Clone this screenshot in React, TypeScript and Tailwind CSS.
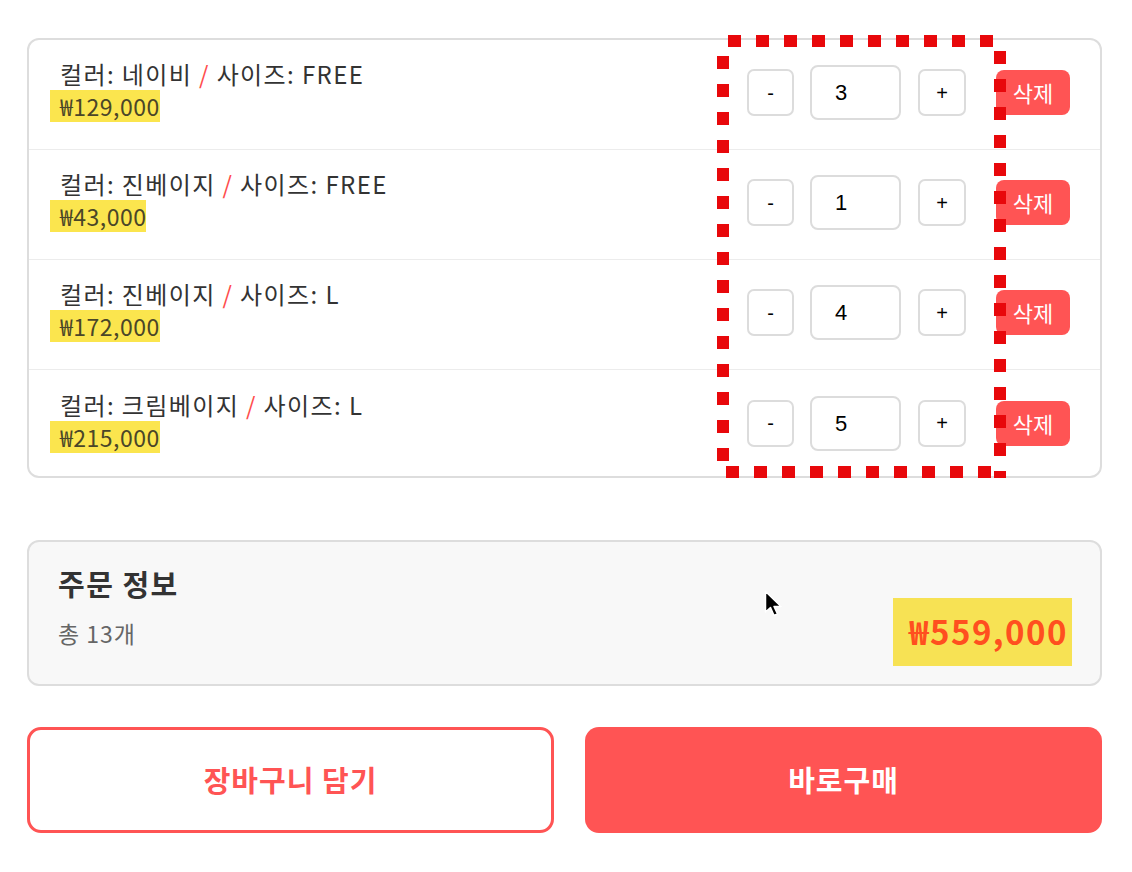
import React from "react";

type Item = { color: string; size: string; price: string; qty: number };

const items: Item[] = [
  { color: "네이비", size: "FREE", price: "₩129,000", qty: 3 },
  { color: "진베이지", size: "FREE", price: "₩43,000", qty: 1 },
  { color: "진베이지", size: "L", price: "₩172,000", qty: 4 },
  { color: "크림베이지", size: "L", price: "₩215,000", qty: 5 },
];

const ko = { fontFamily: '"Noto Sans CJK KR", "Noto Sans", sans-serif' };
const latin = { fontFamily: '"Liberation Sans", Arial, sans-serif' };

function CartRow({ item, last }: { item: Item; last: boolean }) {
  return (
    <div className={`flex h-[110px] items-center pb-[4px] pl-[31px] pr-[30px] ${last ? "" : "border-b border-[#ececec]"}`}>
      <div className="flex-1 flex flex-col pb-[4px]">
        <p className="text-[24px] leading-[30px] tracking-[1.4px] text-[#333]">
          컬러: {item.color} <span className="text-[#ff4d4d]">/</span> 사이즈: {item.size}
        </p>
        <p className="-ml-[10px] mt-[1px] self-start bg-[#fbe54e] pl-[10px] text-[23px] leading-[32px] tracking-[0.5px] text-[#4a4628]">
          {item.price}
        </p>
      </div>
      <div className="flex items-center" style={latin}>
        <button className="flex h-[47px] w-[47px] items-center justify-center rounded-[7px] border-2 border-[#dcdcdc] bg-white text-[20px] text-black">
          -
        </button>
        <div className="ml-[16px] flex h-[55px] w-[91px] items-center rounded-[8px] border-2 border-[#dcdcdc] bg-white pl-[23px] text-[22px] text-black">
          {item.qty}
        </div>
        <button className="ml-[17px] flex h-[47px] w-[48px] items-center justify-center rounded-[7px] border-2 border-[#dcdcdc] bg-white text-[20px] text-black">
          +
        </button>
      </div>
      <button className="ml-[30px] flex h-[45px] w-[74px] items-center justify-center rounded-[8px] bg-[#ff5454] text-[22px] text-white">
        삭제
      </button>
    </div>
  );
}

export default function App() {
  return (
    <div className="relative min-h-[872px] w-[1132px] bg-white" style={ko}>
      <div className="pl-[27px] pr-[30px] pt-[38px]">
        {/* Cart items */}
        <div className="h-[440px] overflow-hidden rounded-[12px] border-2 border-[#dddddd] bg-white">
          {items.map((item, i) => (
            <CartRow key={i} item={item} last={i === items.length - 1} />
          ))}
        </div>

        {/* Order summary */}
        <div className="mt-[62px] flex h-[146px] items-start justify-between rounded-[12px] border-2 border-[#dddddd] bg-[#f8f8f8] pl-[29px] pr-[28px]">
          <div className="flex flex-col pt-[23px]">
            <h2 className="text-[29px] font-bold leading-[36px] tracking-[1.5px] text-[#333]">주문 정보</h2>
            <p className="mt-[17px] text-[23px] leading-[30px] tracking-[1px] text-[#666]">총 13개</p>
          </div>
          <div className="mt-[56px] flex h-[68px] items-center bg-[#f7e254] pl-[16px] pr-[4px]">
            <span className="text-[33px] font-bold tracking-[1.5px] text-[#ff4f1f]">₩559,000</span>
          </div>
        </div>

        {/* Actions */}
        <div className="mt-[41px] flex gap-[31px]">
          <button className="flex h-[106px] w-[527px] items-center justify-center rounded-[14px] border-[3px] border-[#ff5454] bg-white text-[29px] font-bold tracking-[1px] text-[#ff5454]">
            장바구니 담기
          </button>
          <button className="flex h-[106px] flex-1 items-center justify-center rounded-[14px] bg-[#ff5454] text-[29px] font-bold tracking-[1px] text-white">
            바로구매
          </button>
        </div>
      </div>

      {/* Annotation: dotted box around quantity controls */}
      <svg className="pointer-events-none absolute left-0 top-0" width="1132" height="872">
        <g fill="none" stroke="#e8080b" strokeWidth="12" strokeDasharray="13 15">
          <path d="M728 41 L994 41" />
          <path d="M723 56 L723 474" />
          <path d="M1000 51 L1000 478" />
          <path d="M726 472 L1000 472" />
        </g>
      </svg>

      {/* Mouse cursor */}
      <svg className="pointer-events-none absolute left-[764px] top-[590px]" width="22" height="30" viewBox="0 0 22 30">
        <path d="M1.5 1.5 L1.5 22 L6.5 17.5 L10 25.5 L13.5 24 L10 16.5 L17 16.5 Z" fill="#000" stroke="#fff" strokeWidth="1.5" strokeLinejoin="round" />
      </svg>
    </div>
  );
}
